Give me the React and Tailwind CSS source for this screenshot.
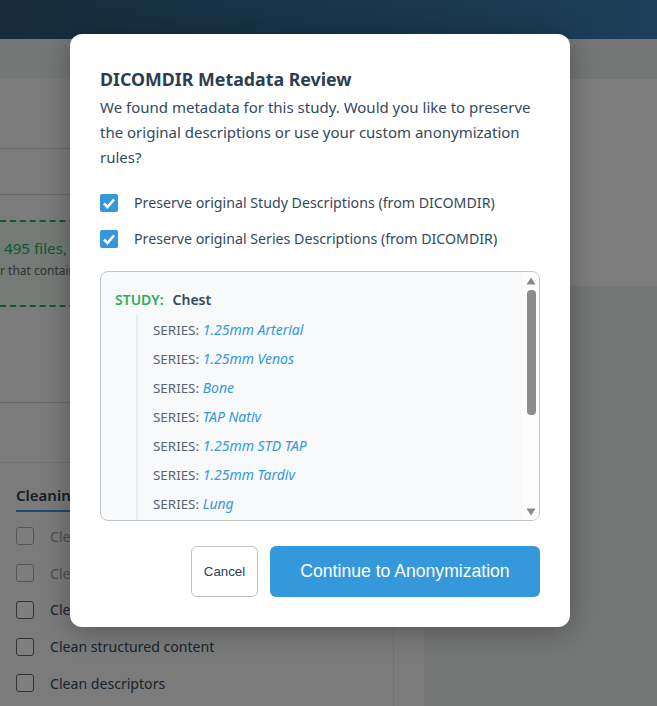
import React from "react";

const series = ["1.25mm Arterial", "1.25mm Venos", "Bone", "TAP Nativ", "1.25mm STD TAP", "1.25mm Tardiv", "Lung"];

function Check() {
  return (
    <span className="flex h-[18px] w-[18px] shrink-0 items-center justify-center rounded-[2px] bg-[#3498db]">
      <svg viewBox="0 0 18 18" className="h-[18px] w-[18px]" fill="none">
        <path d="M4 9.5 7.4 13 14 5.5" stroke="#fff" strokeWidth="2.6" />
      </svg>
    </span>
  );
}

function Box({ dim, label }) {
  return (
    <div className={`flex h-[36.75px] items-center gap-4 ${dim ? "opacity-50" : ""}`}>
      <span className="h-[18px] w-[18px] rounded-[3px] border border-[#666] bg-white" />
      <span className="text-[14.1px] text-[#34495e]">{label}</span>
    </div>
  );
}

export default function App() {
  return (
    <div className="relative h-[706px] w-[657px] overflow-hidden bg-[#f5f5f5] font-['Noto_Sans','Open_Sans',sans-serif]">
      <header className="h-[39px] bg-gradient-to-r from-[#2c5878] to-[#3880b4]" />
      <div className="h-10 bg-[#ebedec]" />
      <div className="flex h-[627px]">
        <main className="w-[394px] shrink-0 border-r border-[#e4e4e4] bg-[#f6f6f6]">
          <div className="h-[70px] border-b border-[#d0d0d0]" />
          <div className="h-[46px] border-b border-[#d0d0d0]" />
          <div className="h-[25px]" />
          <div className="h-[87px] border-y-2 border-dashed border-[#27ae60] bg-[#eaf4ee] pl-0">
            <p className="pt-[15px] pl-[4px] text-[15.2px] leading-[22px] whitespace-nowrap text-[#27ae60]">495 files, 2 studies</p>
            <p className="mt-[3px] text-[12px] whitespace-nowrap text-[#666]">r that contains your data</p>
          </div>
          <div className="h-[96px] border-b border-[#d0d0d0]" />
          <div className="h-[60px] border-b border-[#e2e2e2]" />
          <section className="pl-4">
            <h3 className="mt-[21px] inline-block border-b-2 border-[#3498db] pb-[4px] text-[15px] leading-[22px] font-semibold whitespace-nowrap text-[#2c3e50]">Cleaning</h3>
            <div className="mt-[6px]">
              <Box dim label="Clean pixels" />
              <Box dim label="Clean overlays" />
              <Box label="Clean graphics" />
              <Box label="Clean structured content" />
              <Box label="Clean descriptors" />
            </div>
          </section>
        </main>
        <div className="w-[30px] shrink-0 bg-[#f6f6f6]" />
        <aside className="flex-1 flex flex-col bg-[#f6f6f6]">
          <div className="h-[207px] bg-[#fdfdfd]" />
          <div className="flex-1 bg-[#ebedec]" />
        </aside>
      </div>

      <div className="absolute inset-0 bg-black/50">
        <div className="absolute top-[34px] left-[70px] h-[593px] w-[500px] rounded-[12px] bg-white px-[30px] pt-[33px] shadow-[0_4px_30px_rgba(0,0,0,0.3)]">
          <h2 className="text-[17.8px] leading-6 font-bold whitespace-nowrap text-[#2c3e50]">DICOMDIR Metadata Review</h2>
          <p className="mt-[4px] text-[15px] leading-[25px] text-[#34495e]">
            We found metadata for this study. Would you like to preserve the original descriptions or use your custom anonymization rules?
          </p>
          <label className="mt-[24px] flex h-[18px] items-center gap-4 text-[14.2px] whitespace-nowrap text-[#34495e]"><Check />Preserve original Study Descriptions (from DICOMDIR)</label>
          <label className="mt-[18px] flex h-[18px] items-center gap-4 text-[14.2px] whitespace-nowrap text-[#34495e]"><Check />Preserve original Series Descriptions (from DICOMDIR)</label>

          <div className="relative mt-[23px] h-[250px] overflow-hidden rounded-[8px] border border-[#bdc3c7] bg-[#f8f9fa]">
            <div className="pt-[17px] pl-[14px]">
              <div className="flex h-5 items-center text-[14px] font-semibold">
                <span className="text-[#27ae60]">STUDY:</span>
                <span className="ml-[9px] text-[#34495e]">Chest</span>
              </div>
              <ul className="mt-[6px] ml-[21px] border-l-2 border-[#e9ecef] pb-[8px] pl-[15px]">
                {series.map((s) => (
                  <li key={s} className="h-[29px] text-[14px] leading-[29px] whitespace-nowrap text-[#566573]">
                    <span className="text-[13.4px]">SERIES:</span> <em className="text-[#3498db]">{s}</em>
                  </li>
                ))}
              </ul>
            </div>
            <div className="absolute top-0 right-0 bottom-0 flex w-[16px] flex-col items-center bg-[#fcfcfc] pt-[5px] pb-[4px]">
              <svg viewBox="0 0 10 8" className="h-2 w-[10px]"><path d="M5 0.5 9.5 7.5H.5Z" fill="#8a8a8a" /></svg>
              <div className="mt-[5px] h-[125px] w-[9px] rounded-[4px] bg-[#8c8c8c]" />
              <div className="flex-1" />
              <svg viewBox="0 0 10 8" className="h-2 w-[10px]"><path d="M5 7.5 9.5 .5H.5Z" fill="#8a8a8a" /></svg>
            </div>
          </div>

          <div className="mt-[25px] flex justify-end gap-3 font-['Liberation_Sans',Arial,sans-serif]">
            <button className="h-[51px] w-[67px] rounded-[6px] border border-[#bdc3c7] bg-white text-[13.33px] text-[#2c3e50]">Cancel</button>
            <button className="h-[51px] w-[270px] rounded-[6px] bg-[#3498db] text-[17.6px] text-white">Continue to Anonymization</button>
          </div>
        </div>
      </div>
    </div>
  );
}
